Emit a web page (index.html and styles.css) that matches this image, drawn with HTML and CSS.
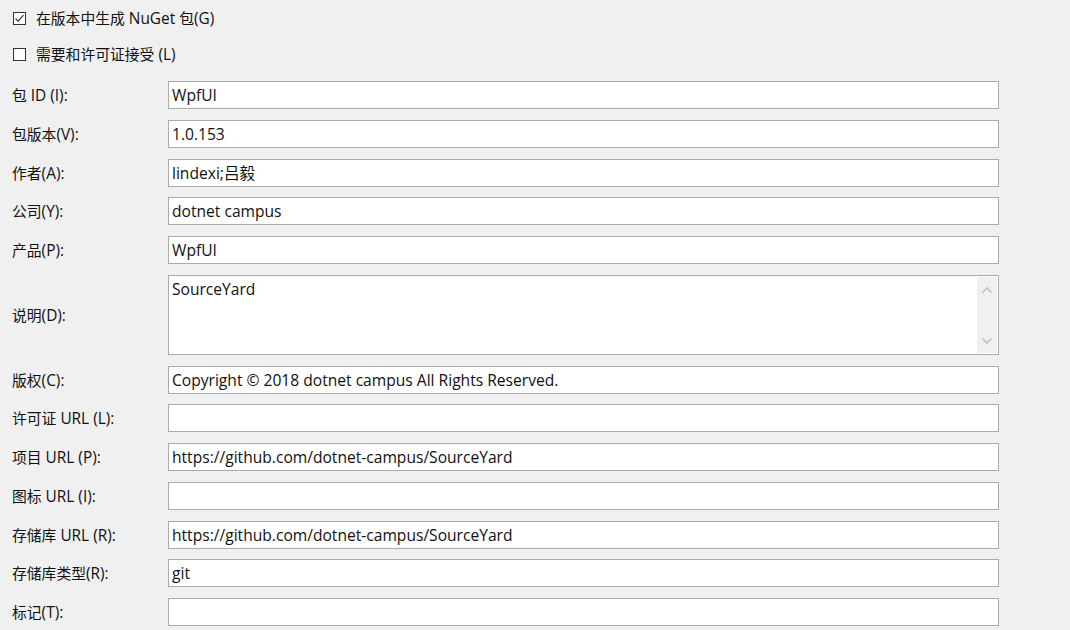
FILE: index.html
```html
<!DOCTYPE html>
<html lang="zh-CN">
<head>
<meta charset="utf-8">
<title>NuGet 包属性</title>
<link rel="stylesheet" href="styles.css">
</head>
<body>
<div class="page">
  <div class="checks">
    <label class="check">
      <span class="box"><svg width="11" height="11" viewBox="0 0 11 11"><polyline points="1.5,5.5 4.2,8.2 9.5,2.2" fill="none" stroke="#333" stroke-width="1.2"/></svg></span>
      <span class="check-text"><span class="c">在版本中生成</span> NuGet <span class="c">包</span>(G)</span>
    </label>
    <label class="check">
      <span class="box"></span>
      <span class="check-text"><span class="c">需要和许可证接受</span> (L)</span>
    </label>
  </div>
  <div class="form">
    <div class="lbl"><span class="c">包</span> ID (I):</div><div class="field">WpfUI</div>
    <div class="lbl"><span class="c">包版本</span>(V):</div><div class="field">1.0.153</div>
    <div class="lbl"><span class="c">作者</span>(A):</div><div class="field">lindexi;吕毅</div>
    <div class="lbl"><span class="c">公司</span>(Y):</div><div class="field">dotnet campus</div>
    <div class="lbl"><span class="c">产品</span>(P):</div><div class="field">WpfUI</div>
    <div class="lbl"><span class="c">说明</span>(D):</div>
    <div class="field multi">
      <div class="multi-text">SourceYard</div>
      <div class="sb">
        <svg width="12" height="8" viewBox="0 0 12 8"><polyline points="1.5,6.5 6,2 10.5,6.5" fill="none" stroke="#c2c2c2" stroke-width="1.6"/></svg>
        <svg width="12" height="8" viewBox="0 0 12 8"><polyline points="1.5,1.5 6,6 10.5,1.5" fill="none" stroke="#c2c2c2" stroke-width="1.6"/></svg>
      </div>
    </div>
    <div class="lbl"><span class="c">版权</span>(C):</div><div class="field">Copyright © 2018 dotnet campus All Rights Reserved.</div>
    <div class="lbl"><span class="c">许可证</span> URL (L):</div><div class="field"></div>
    <div class="lbl"><span class="c">项目</span> URL (P):</div><div class="field">https://github.com/dotnet-campus/SourceYard</div>
    <div class="lbl"><span class="c">图标</span> URL (I):</div><div class="field"></div>
    <div class="lbl"><span class="c">存储库</span> URL (R):</div><div class="field">https://github.com/dotnet-campus/SourceYard</div>
    <div class="lbl"><span class="c">存储库类型</span>(R):</div><div class="field">git</div>
    <div class="lbl"><span class="c">标记</span>(T):</div><div class="field"></div>
  </div>
</div>
</body>
</html>
```
FILE: styles.css
```css
html, body {
  margin: 0;
  padding: 0;
  background: #f0f0f0;
}
body {
  font-family: "Open Sans", "Noto Sans CJK SC", sans-serif;
  font-size: 15.4px;
  color: #111;
  overflow: hidden;
}
.c {
  font-size: 14.8px;
}
.page {
  padding: 0 0 0 12px;
}
.checks {
  display: flex;
  flex-direction: column;
}
.check {
  display: flex;
  align-items: center;
  height: 36px;
  gap: 10px;
}
.box {
  width: 11px;
  height: 11px;
  border: 1px solid #333;
  background: #fff;
  display: flex;
  align-items: center;
  justify-content: center;
  box-sizing: content-box;
  margin-left: 1px;
}
.box svg { display: block; }
.form {
  margin-top: 9px;
  display: grid;
  grid-template-columns: 156px 831px;
  row-gap: 10.75px;
  align-items: center;
}
.lbl {
  white-space: nowrap;
}
.field {
  height: 28px;
  box-sizing: border-box;
  border: 1px solid #ababab;
  background: #fff;
  font-size: 15.6px;
  line-height: 26px;
  padding: 0 3px;
  white-space: nowrap;
  overflow: hidden;
}
.field.multi {
  height: 80px;
  display: flex;
  padding: 0 1px 1px 3px;
}
.multi-text {
  flex: 1;
}
.sb {
  width: 20px;
  margin-top: 1px;
  background: #f0f0f0;
  display: flex;
  flex-direction: column;
  align-items: center;
  justify-content: space-between;
  padding: 9px 0 8px;
  box-sizing: border-box;
}
.sb svg { display: block; }
```
